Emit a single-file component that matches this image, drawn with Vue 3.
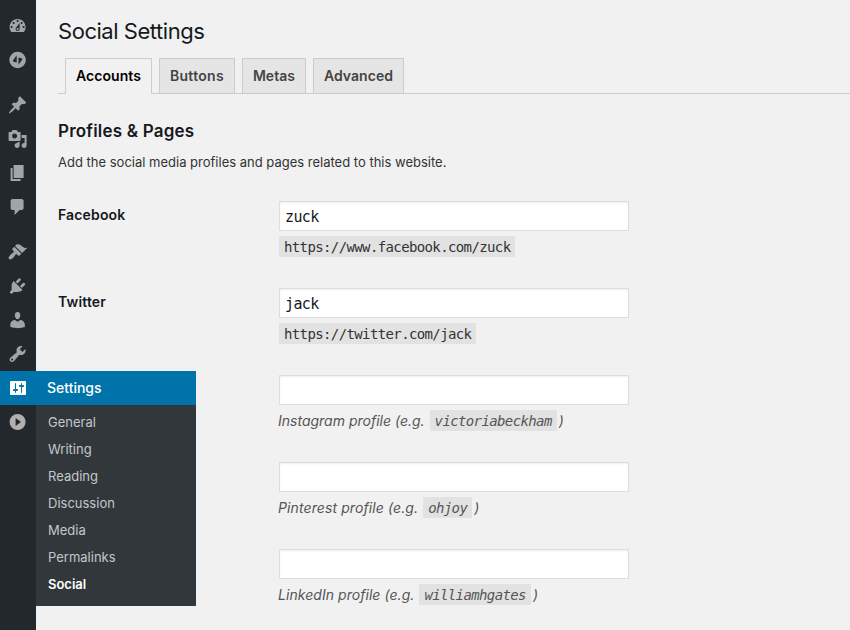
<script setup>
const groups = [
  [
    { name: 'dashboard', d: 'M3.76 16h12.48c1.1-1.37 1.76-3.11 1.76-5 0-4.42-3.58-8-8-8s-8 3.58-8 8c0 1.89.66 3.63 1.76 5zM10 4c.55 0 1 .45 1 1s-.45 1-1 1-1-.45-1-1 .45-1 1-1zM6 6c.55 0 1 .45 1 1s-.45 1-1 1-1-.45-1-1 .45-1 1-1zm8 0c.55 0 1 .45 1 1s-.45 1-1 1-1-.45-1-1 .45-1 1-1zm-5.37 5.55L12 7v6c0 1.1-.9 2-2 2s-2-.9-2-2c0-.57.24-1.08.63-1.45zM4 10c.55 0 1 .45 1 1s-.45 1-1 1-1-.45-1-1 .45-1 1-1zm12 0c.55 0 1 .45 1 1s-.45 1-1 1-1-.45-1-1 .45-1 1-1zm-5 3c0-.55-.45-1-1-1s-1 .45-1 1 .45 1 1 1 1-.45 1-1z' },
    { name: 'performance', d: 'M10 1.7a8.3 8.3 0 1 0 0 16.6a8.3 8.3 0 1 0 0-16.6zM9.1 5.3v7.2l-3-.8c-.8-.2-1-.8-.6-1.5zM10.9 14.7V7.5l3 .8c.8.2 1 .8.6 1.5z' },
  ],
  [
    { name: 'posts', d: 'M10.44 3.02l1.82-1.82 6.36 6.35-1.83 1.82c-1.05-.68-2.48-.57-3.41.36l-.75.75c-.92.93-1.04 2.35-.35 3.41l-1.83 1.82-2.41-2.41-2.8 2.79c-.42.42-3.38 2.71-3.8 2.29s1.86-3.39 2.28-3.81l2.79-2.79L4.1 9.36l1.83-1.82c1.05.69 2.48.57 3.4-.36l.75-.75c.93-.92 1.05-2.35.36-3.41z' },
    { name: 'media', d: 'M13 11V4c0-.55-.45-1-1-1h-1.67L9 1H5L3.67 3H2c-.55 0-1 .45-1 1v7c0 .55.45 1 1 1h10c.55 0 1-.45 1-1zM7 4.5c1.38 0 2.5 1.12 2.5 2.5S8.38 9.5 7 9.5 4.5 8.38 4.5 7 5.62 4.5 7 4.5zM14 6h5v10.5c0 1.38-1.12 2.5-2.5 2.5S14 17.88 14 16.5s1.12-2.5 2.5-2.5c.17 0 .34.02.5.05V9h-3V6zm-4 8.05V13h2v3.5c0 1.38-1.12 2.5-2.5 2.5S7 17.88 7 16.5 8.12 14 9.5 14c.17 0 .34.02.5.05z' },
    { name: 'pages', d: 'M6 15V2h10v13H6zm-1 1h8v2H3V5h2v11z' },
    { name: 'comments', d: 'M5 2h9c1.1 0 2 .9 2 2v7c0 1.1-.9 2-2 2h-2l-5 5v-5H5c-1.1 0-2-.9-2-2V4c0-1.1.9-2 2-2z' },
  ],
  [
    { name: 'appearance', d: 'M14.48 11.06L7.41 3.99l1.5-1.5c.5-.56 2.3-.47 3.51.32 1.21.8 1.43 1.28 2.91 2.1 1.18.64 2.45 1.26 4.45.85zm-.71.71L6.7 4.7 4.93 6.47c-.39.39-.39 1.02 0 1.41l1.06 1.06c.39.39.39 1.03 0 1.42-.6.6-1.43 1.11-2.21 1.69-.35.26-.7.53-1.01.84C1.43 14.23.4 16.08 1.4 17.07c.99 1 2.84-.03 4.18-1.36.31-.31.58-.66.85-1.02.57-.78 1.08-1.61 1.69-2.21.39-.39 1.02-.39 1.41 0l1.06 1.06c.39.39 1.02.39 1.41 0z' },
    { name: 'plugins', d: 'M13.11 4.36L9.87 7.6 8 5.73l3.24-3.24c.35-.34 1.05-.2 1.56.32.52.51.66 1.21.31 1.55zm-8 1.77l.91-1.12 9.01 9.01-1.19.84c-.71.71-2.63 1.16-3.82 1.16H6.14L4.9 17.26c-.59.59-1.54.59-2.12 0-.59-.58-.59-1.53 0-2.12l1.24-1.24v-3.88c0-1.13.4-3.19 1.09-3.89zm7.26 3.97l3.24-3.24c.34-.35 1.04-.21 1.55.31.52.51.66 1.21.31 1.55l-3.24 3.25z' },
    { name: 'users', d: 'M10 9.25c-2.27 0-2.73-3.44-2.73-3.44C7 4.02 7.82 2 9.97 2c2.16 0 2.98 2.02 2.71 3.81 0 0-.41 3.44-2.68 3.44zm0 2.57L12.72 10c2.39 0 4.52 2.33 4.52 4.53v2.49s-3.65 1.13-7.24 1.13c-3.65 0-7.24-1.13-7.24-1.13v-2.49c0-2.25 1.94-4.48 4.47-4.48z' },
    { name: 'tools', d: 'M16.68 9.77c-1.34 1.34-3.3 1.67-4.95.99l-5.41 6.52c-.99.99-2.59.99-3.58 0s-.99-2.59 0-3.57l6.52-5.42c-.68-1.65-.35-3.61.99-4.95 1.28-1.28 3.12-1.62 4.72-1.06l-2.89 2.89 2.82 2.82 2.86-2.87c.53 1.58.18 3.39-1.08 4.65zM3.81 16.21c.4.39 1.04.39 1.43 0 .4-.4.4-1.04 0-1.43-.39-.4-1.03-.4-1.43 0-.39.39-.39 1.03 0 1.43z' },
    { name: 'settings', current: true, d: 'M18 16V4c0-.55-.45-1-1-1H3c-.55 0-1 .45-1 1v12c0 .55.45 1 1 1h14c.55 0 1-.45 1-1zM8 11h1c.55 0 1 .45 1 1s-.45 1-1 1H8v1.5c0 .28-.22.5-.5.5s-.5-.22-.5-.5V13H6c-.55 0-1-.45-1-1s.45-1 1-1h1V5.5c0-.28.22-.5.5-.5s.5.22.5.5V11zm5-2h-1c-.55 0-1-.45-1-1s.45-1 1-1h1V5.5c0-.28.22-.5.5-.5s.5.22.5.5V7h1c.55 0 1 .45 1 1s-.45 1-1 1h-1v5.5c0 .28-.22.5-.5.5s-.5-.22-.5-.5V9z' },
    { name: 'collapse', d: 'M10 2a8 8 0 1 0 0 16a8 8 0 1 0 0-16zM8 6l5.4 4L8 14z' },
  ],
]
const submenu = ['General', 'Writing', 'Reading', 'Discussion', 'Media', 'Permalinks', 'Social']
const tabs = ['Accounts', 'Buttons', 'Metas', 'Advanced']
const fields = [
  { label: 'Facebook', value: 'zuck', url: 'https://www.facebook.com/zuck' },
  { label: 'Twitter', value: 'jack', url: 'https://twitter.com/jack' },
  { network: 'Instagram', example: 'victoriabeckham' },
  { network: 'Pinterest', example: 'ohjoy' },
  { network: 'LinkedIn', example: 'williamhgates' },
]
</script>

<template>
  <div class="page">
    <nav class="sidebar">
      <ul v-for="(group, g) in groups" :key="g" class="group">
        <li v-for="item in group" :key="item.name" class="item" :class="[item.name, { current: item.current }]">
          <svg class="icon" :viewBox="item.current ? '0 0 20 20' : '0.4 0 20 20'"><path :d="item.d" fill-rule="evenodd" /></svg>
          <div v-if="item.current" class="flyout">
            <div class="flyout-title">Settings</div>
            <ul class="submenu">
              <li v-for="s in submenu" :key="s" :class="{ active: s === 'Social' }">{{ s }}</li>
            </ul>
          </div>
        </li>
      </ul>
    </nav>
    <main class="content">
      <h1>Social Settings</h1>
      <div class="tabs">
        <a v-for="(t, i) in tabs" :key="t" class="tab" :class="{ active: i === 0 }">{{ t }}</a>
      </div>
      <h2>Profiles &amp; Pages</h2>
      <p class="intro">Add the social media profiles and pages related to this website.</p>
      <div v-for="(f, i) in fields" :key="i" class="row">
        <div class="label">{{ f.label }}</div>
        <div class="field">
          <input type="text" :value="f.value">
          <div v-if="f.url" class="help"><code>{{ f.url }}</code></div>
          <div v-else class="help hint" :class="f.network.toLowerCase()"><span>{{ f.network }} profile (e.g.</span><code>{{ f.example }}</code><span>)</span></div>
        </div>
      </div>
    </main>
  </div>
</template>

<style>
body { margin: 0; background: #f1f1f1; overflow: hidden; }
</style>

<style scoped>
.page { display: flex; width: 850px; height: 630px; overflow: hidden; background: #f1f1f1; color: #333; font-family: Inter, "Liberation Sans", sans-serif; font-size: 13px; }
ul { list-style: none; margin: 0; padding: 0; }
.sidebar { flex: none; box-sizing: border-box; width: 36px; padding-top: 9px; background: #23282d; }
.group { margin-bottom: 11px; }
.item { position: relative; display: flex; align-items: center; height: 34px; padding-left: 8px; }
.icon { display: block; width: 20px; height: 20px; fill: #a0a5aa; }
.current { background: #0073aa; }
.current .icon { fill: #fff; }
.collapse .icon { fill: #b0b0b0; }
.flyout { position: absolute; left: 36px; top: 0; width: 160px; }
.flyout-title { height: 34px; padding-left: 11px; background: #0073aa; color: #fff; font-size: 14px; font-weight: 500; line-height: 34px; }
.submenu { padding: 4px 0 8px; background: #32373c; }
.submenu li { height: 27px; padding-left: 12px; color: #c3c8cc; font-size: 13px; line-height: 27px; }
.submenu .active { color: #fff; font-weight: 600; }
.content { flex: 1; padding-left: 22px; }
h1 { margin: 0; padding-top: 16px; color: #15191d; font-size: 22px; font-weight: 400; letter-spacing: -.46px; line-height: 30px; }
.tabs { display: flex; gap: 7px; height: 35px; margin-top: 12px; padding-left: 7px; border-bottom: 1px solid #ccc; }
.tab { box-sizing: border-box; height: 35px; padding: 0 10px; border: 1px solid #ccc; border-bottom: 0; background: #e5e5e5; color: #444; font-size: 14px; font-weight: 600; letter-spacing: 0; line-height: 34px; }
.tab:nth-child(2) { letter-spacing: .3px; }
.tab:nth-child(4) { letter-spacing: .05px; }
.tab.active { height: 36px; letter-spacing: .06px; background: #f1f1f1; color: #000; }
h2 { margin: 0; padding-top: 26px; color: #15191d; font-size: 17px; font-weight: 600; letter-spacing: .2px; line-height: 22px; }
.intro { margin: 10px 0 29px; line-height: 20px; }
.row { display: flex; height: 87px; }
.label { width: 221px; padding-top: 4px; color: #15191d; font-size: 14px; font-weight: 600; letter-spacing: .15px; line-height: 20px; }
input { display: block; box-sizing: border-box; width: 350px; height: 30px; margin: 0; padding: 1px 5px 0; border: 1px solid #ddd; background: #fff; box-shadow: inset 0 1px 2px rgba(0, 0, 0, .07); color: #15191d; font-family: "DejaVu Sans Mono", monospace; font-size: 15px; letter-spacing: -.62px; outline: none; }
.help { display: flex; height: 21px; margin-top: 5px; line-height: 21px; white-space: nowrap; }
code { box-sizing: border-box; height: 21px; padding: 1px 5px 0; background: #e2e2e2; font-family: "DejaVu Sans Mono", monospace; font-size: 14px; letter-spacing: -.62px; }
.hint { margin-left: -1px; color: #555; font-size: 14px; font-style: italic; }
.hint.pinterest { letter-spacing: .1px; }
.hint.linkedin { letter-spacing: .05px; }
.hint code { margin: 0 2px 0 5px; }
</style>
